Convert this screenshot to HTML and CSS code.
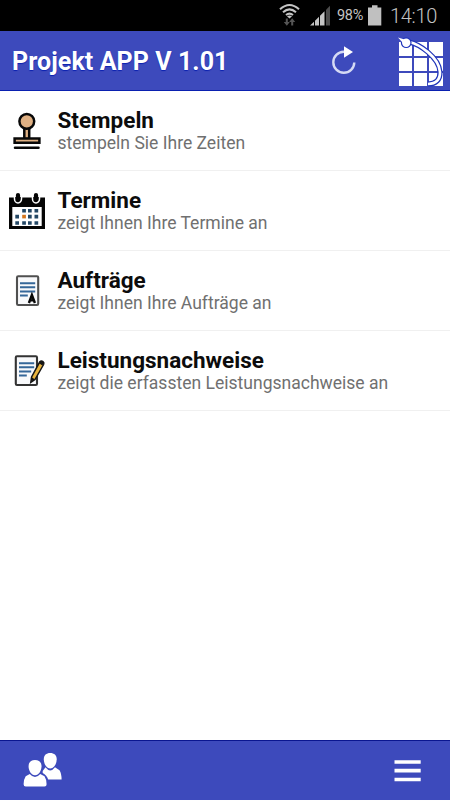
FILE: index.html
```html
<!DOCTYPE html>
<html lang="de">
<head>
<meta charset="utf-8">
<title>Projekt APP</title>
<link rel="stylesheet" href="styles.css">
</head>
<body>
<div class="status">
  <svg class="wifi" width="24" height="31" viewBox="0 0 24 31" fill="none" stroke="#c4c4c4" stroke-width="2.1">
    <path d="M1 9.2Q10.500 .8 20 9.200M4 12.200Q10.500 6.600 17 12.200M7 15Q10.500 12.200 14 15"/>
    <path d="M8 16.200Q10.500 14.800 13 16.200L10.500 18.500Z" fill="#c4c4c4" stroke="none"/>
    <g fill="#555" stroke="none"><path d="M6.800 18.500h2v3.500h2l-3 3.800-3-3.800h2z"/><path d="M12.200 25.500h2V22h2l-3-3.800-3 3.800h2z"/></g>
  </svg>
  <svg class="signal" width="22" height="31" viewBox="0 0 22 31" fill="#c4c4c4">
    <path d="M0 25.500L4 21.800V25.500ZM5 20.800L9 16.800V25.500H5ZM10 15.800L14.500 11.200V25.500H10Z"/><path d="M16 9.800L20 5.800V25.500H16Z" fill="#4c4c4c"/>
  </svg>
  <span class="percent">98%</span>
  <svg class="battery" width="14" height="31" viewBox="0 0 14 31"><path d="M0 7.500H4V5.200H9.500V7.500H13.300V25.500H0Z" fill="#c0c0c0"/></svg>
  <span class="clock">14:10</span>
</div>
<header class="header">
  <h1>Projekt APP V 1.01</h1>
  <svg class="refresh" width="30" height="60" viewBox="0 0 30 60"><path d="M17.500 20.800H13.700A10.500 10.500 0 1 0 24.300 31.500" fill="none" stroke="#d5daf4" stroke-width="2.400"/><path d="M14 15.200L23 21L14 26.800Z" fill="#fff"/></svg>
  <svg class="logo" width="46" height="60" viewBox="0 0 46 60">
    <path fill="#fff" d="M1 11H14V25H1ZM16 11H29V25H16ZM31 11H45V25H31ZM1 27H14V40H1ZM16 27H29V40H16ZM31 27H45V40H31ZM1 42H14V55H1ZM16 42H29V55H16ZM31 42H45V55H31Z"/>
    <path d="M11 11C21 13 41 26 42 41C42.300 48.500 38 53 30 53" fill="none" stroke="#1f34ba" stroke-width="5.200"/>
    <path d="M11 11C21 13 41 26 42 41C42.300 48.500 38 53 30 53" fill="none" stroke="#fff" stroke-width="2.700"/>
    <circle cx="8.200" cy="11.700" r="5.400" fill="#1f34ba"/>
    <circle cx="8.200" cy="11.700" r="4.200" fill="#fff"/>
    <path d="M0 6.500L6.500 8.500L4.500 11.500Z" fill="#fff"/>
  </svg>
</header>
<main class="list">
  <div class="row">
    <svg class="icon" width="58" height="60" viewBox="0 0 58 60">
      <g fill="#dfb083" stroke="#080808" stroke-width="2.500"><path d="M24.300 27H29.200V39H24.300Z"/><circle cx="26.800" cy="21.300" r="7.400"/><path d="M14.600 38.400H39.400V42.800H14.600Z"/></g>
      <path d="M15 47.800H38.500" stroke="#080808" stroke-width="2.500" stroke-linecap="round"/>
    </svg>
    <div><h2>Stempeln</h2><p>stempeln Sie Ihre Zeiten</p></div>
  </div>
  <div class="row">
    <svg class="icon" width="58" height="60" viewBox="0 0 58 60">
      <path d="M9 17.500H45V49H9Z" fill="#050505"/><path d="M12.300 27H41.700V46H12.300Z" fill="#fff"/>
      <g fill="#050505" stroke="#fff" stroke-width="1.500"><path d="M14.500 17V19A3.500 4 0 0 0 21.500 19V17"/><path d="M32.500 17V19A3.500 4 0 0 0 39.500 19V17"/></g>
      <g stroke="#050505" stroke-width="4.200" stroke-linecap="round"><path d="M18 15V19M36 15V19"/></g>
      <path fill="#234765" d="M22.200 29h3.700v3.600h-3.700zM28 29h3.700v3.600H28zM34.500 29H38.200v3.600h-3.700zM15.300 34.800h3.700v3.600h-3.700zM28 34.800h3.700v3.600H28zM34.500 34.800H38.200v3.600h-3.700zM15.300 41.200h3.700v3.600h-3.700zM22.200 41.200h3.700v3.600h-3.700zM28 41.200h3.700v3.600H28zM34.500 41.200H38.200v3.600h-3.700z"/>
      <path fill="#d5761c" d="M22.200 34.800h3.700v3.600h-3.700z"/>
    </svg>
    <div><h2>Termine</h2><p>zeigt Ihnen Ihre Termine an</p></div>
  </div>
  <div class="row">
    <svg class="icon" width="58" height="60" viewBox="0 0 58 60">
      <rect x="17" y="16.200" width="21.200" height="28.800" rx="1.200" fill="#f8f9fb" stroke="#505050" stroke-width="2.100"/>
      <path d="M20 23.200H35.200M20 27.300H35.200M20 31.400H35.200M20 35.500H27.800" stroke="#356799" stroke-width="2"/>
      <path d="M28.900 43L31.900 35L34.900 43M30 40.400H34" fill="none" stroke="#080808" stroke-width="2.400"/>
    </svg>
    <div><h2>Aufträge</h2><p>zeigt Ihnen Ihre Aufträge an</p></div>
  </div>
  <div class="row">
    <svg class="icon" width="58" height="60" viewBox="0 0 58 60">
      <rect x="15.800" y="16.200" width="21.200" height="28.800" rx="1.200" fill="#f8f9fb" stroke="#333" stroke-width="2.100"/>
      <path d="M19 23.200H34.200M19 27.300H34.200M19 31.400H31.200M19 35.500H26.800" stroke="#356799" stroke-width="2"/>
      <path d="M30.800 42.400L31.600 37L39.800 21.800Q41.300 20.300 43 21.600Q44.500 22.800 43.600 24.500L35 39.500Z" fill="#e9b43e" stroke="#151515" stroke-width="1.500"/>
      <path d="M31 42L32 37.500L34.800 39.200ZM39 23.200L42.300 25.400L44 22.800L41 20.800Z" fill="#151515"/>
    </svg>
    <div><h2>Leistungsnachweise</h2><p>zeigt die erfassten Leistungsnachweise an</p></div>
  </div>
</main>
<footer class="footer">
  <svg width="40" height="59" viewBox="0 0 40 59">
    <g fill="#fff">
      <path d="M19.800 18.300C19.800 14.300 22.300 12.100 26.200 12.100S32.700 14.300 32.700 18.300C32.700 22.800 30 27.500 26.200 27.500S19.800 22.800 19.800 18.300Z"/>
      <path d="M21.500 26.300Q26.200 32.600 31 26.300L35.500 29.200Q37.600 32.500 37.600 38.600H24.200Q22.800 34 18.700 32V30Z"/>
      <path d="M4.600 25.300C4.600 21.300 7 19 11 19S17.500 21.300 17.500 25.300C17.500 29.800 14.800 34.200 11 34.200S4.600 29.800 4.600 25.300Z"/>
      <path d="M5.800 33Q11 39.200 16.200 33L20.500 35.300Q22.600 38.500 22.600 43.200Q22.600 45.500 20.500 45.500H1.700Q-.4 45.500-.4 43.200Q-.4 38.500 1.700 35.300Z"/>
    </g>
  </svg>
  <svg width="27" height="59" viewBox="0 0 27 59"><path d="M.5 19.200H26.700V22.800H.5ZM.5 27.800H26.700V31.400H.5ZM.5 36.700H26.700V40.300H.5Z" fill="#fff"/></svg>
</footer>
</body>
</html>
```
FILE: styles.css
```css
* { box-sizing: border-box; }
body {
  margin: 0;
  height: 800px;
  display: flex;
  flex-direction: column;
  background: #fff;
  font-family: Roboto, "Liberation Sans", sans-serif;
}
h1, h2, p { margin: 0; }
svg { display: block; flex: none; overflow: visible; }
.status {
  height: 31px;
  background: #000;
  color: #c4c4c4;
  display: flex;
  justify-content: flex-end;
  padding-right: 12px;
}
.wifi { margin-right: 7px; }
.signal { margin-right: 5px; }
.percent { width: 28px; margin-right: 3px; font-size: 14.5px; line-height: 32px; letter-spacing: -.3px; }
.battery { margin-right: 8px; }
.clock { width: 48px; font-size: 20px; line-height: 33px; letter-spacing: -.3px; font-weight: 300; white-space: nowrap; }
.header {
  height: 60px;
  background: #3d4abc;
  border-bottom: 1px solid #0a20b0;
  display: flex;
  padding-right: 6px;
}
.header h1 {
  flex: 1;
  padding-left: 12px;
  color: #fff;
  font-size: 25px;
  letter-spacing: .08px;
  line-height: 61px;
  font-weight: 700;
  text-shadow: 0 1px 1px #0a20b0;
}
.refresh { margin-right: 38px; }
.list { flex: 1; }
.row {
  height: 80px;
  border-bottom: 1px solid #f0f0f0;
  display: flex;
  padding-top: 9px;
}
.row > div { margin-left: -.5px; }
.row h2 {
  color: #0c0c0c;
  font-size: 22.5px;
  line-height: 26px;
  padding-top: 7px;
  font-weight: 700;
}
.row p {
  color: #707070;
  font-size: 17.55px;
  line-height: 20px;
  white-space: nowrap;
}
.footer {
  height: 60px;
  background: #3d4abc;
  border-top: 1px solid #0a1690;
  display: flex;
  justify-content: space-between;
  padding: 0 29px 0 24px;
}
```
